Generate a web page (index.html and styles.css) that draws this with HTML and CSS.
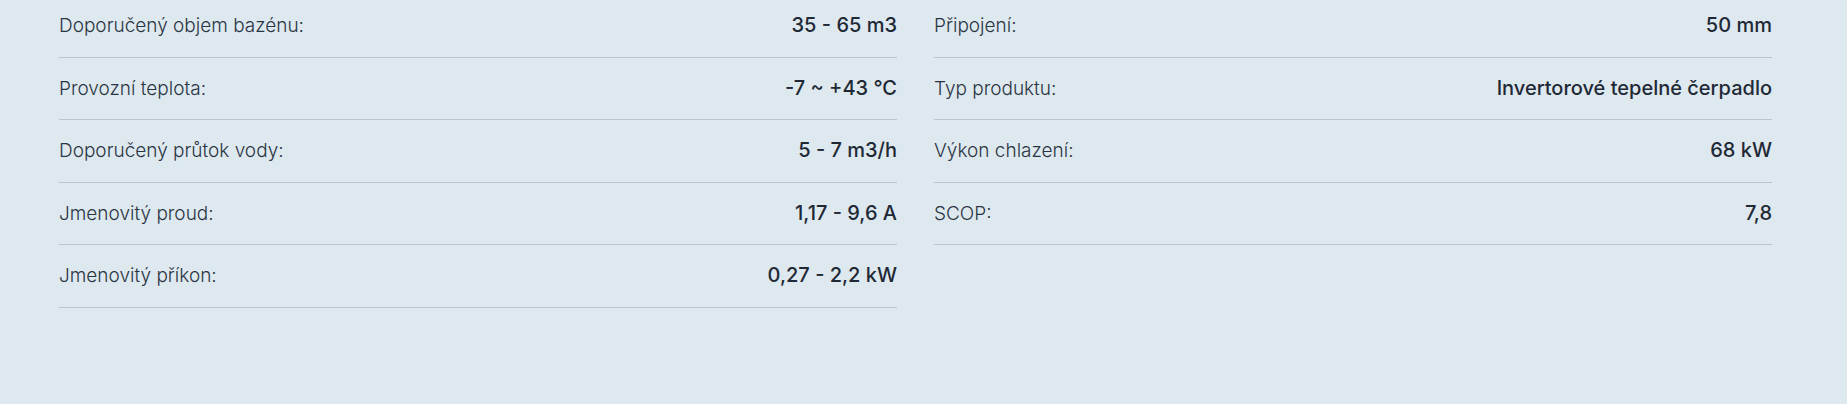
FILE: index.html
```html
<!DOCTYPE html>
<html lang="cs">
<head>
<meta charset="utf-8">
<title>Parametry</title>
<link rel="stylesheet" href="styles.css">
</head>
<body>
<div class="specs">
  <div class="col">
    <div class="row"><span class="label">Doporučený objem bazénu:</span><span class="value">35 - 65 m3</span></div>
    <div class="row"><span class="label">Provozní teplota:</span><span class="value">-7 ~ +43 °C</span></div>
    <div class="row"><span class="label">Doporučený průtok vody:</span><span class="value">5 - 7 m3/h</span></div>
    <div class="row"><span class="label">Jmenovitý proud:</span><span class="value">1,17 - 9,6 A</span></div>
    <div class="row"><span class="label">Jmenovitý příkon:</span><span class="value">0,27 - 2,2 kW</span></div>
  </div>
  <div class="col">
    <div class="row"><span class="label">Připojení:</span><span class="value">50 mm</span></div>
    <div class="row"><span class="label">Typ produktu:</span><span class="value">Invertorové tepelné čerpadlo</span></div>
    <div class="row"><span class="label">Výkon chlazení:</span><span class="value">68 kW</span></div>
    <div class="row"><span class="label">SCOP:</span><span class="value">7,8</span></div>
  </div>
</div>
</body>
</html>
```
FILE: styles.css
```css
html, body {
  margin: 0;
  padding: 0;
  background: #dee8ef;
}
body {
  font-family: Inter, "Noto Sans", sans-serif;
  color: #2a3543;
}
.specs {
  display: grid;
  grid-template-columns: 838px 838px;
  column-gap: 37px;
  margin: -5px 0 0 59px;
  align-items: start;
}
.row {
  display: flex;
  justify-content: space-between;
  align-items: center;
  padding: 20px 0;
  line-height: 21.5px;
  border-bottom: 1px solid #b9c5d0;
  font-size: 19px;
}
.label {
  font-weight: 300;
}
.value {
  font-size: 20px;
  font-weight: 500;
  color: #1f2936;
}
```
